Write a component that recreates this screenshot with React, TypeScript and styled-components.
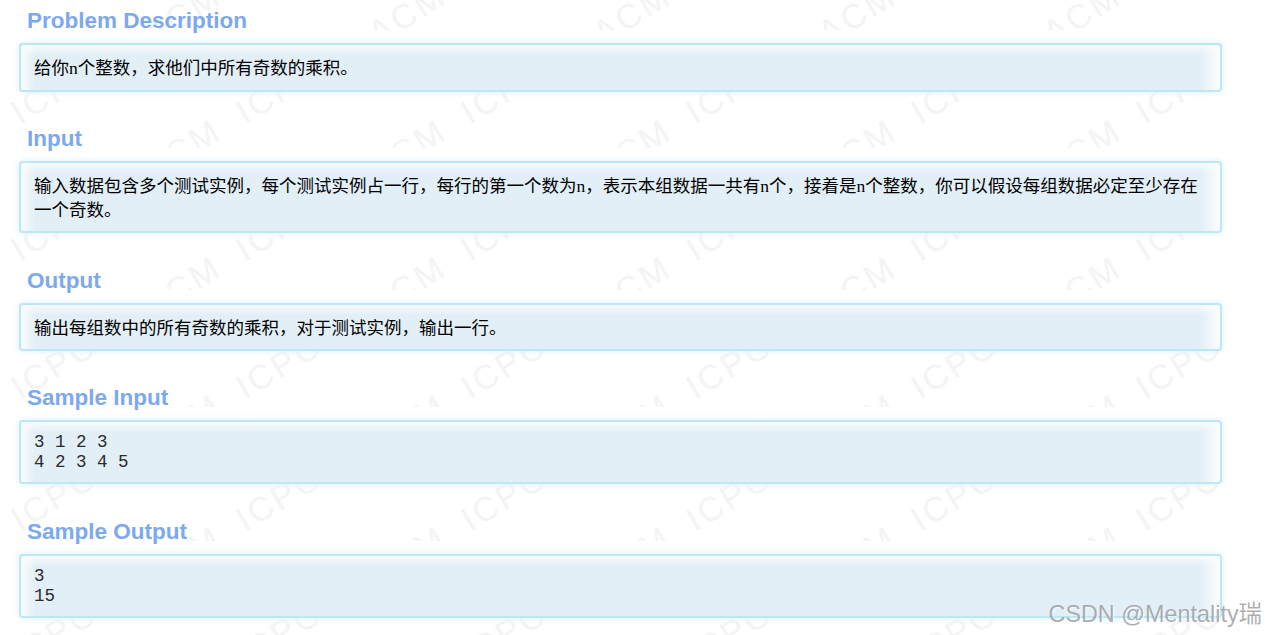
import React from "react";
import styled, { createGlobalStyle } from "styled-components";

const Global = createGlobalStyle`
  html, body { margin: 0; padding: 0; background: #fff; }
  body { width: 1265px; height: 635px; overflow: hidden; }
`;

const Page = styled.div`
  position: relative;
  width: 1265px;
  height: 635px;
  overflow: hidden;
  background: #fff;
`;

const Watermark = styled.svg`
  position: absolute;
  inset: 0;
  width: 1265px;
  height: 635px;
`;

const MarkText = styled.text`
  font-family: "Liberation Sans", Arial, sans-serif;
  font-size: 34px;
  letter-spacing: 3px;
  fill: #f4f4f4;
`;

const Content = styled.main`
  position: relative;
  display: flex;
  flex-direction: column;
`;

const Section = styled.section`
  margin-bottom: 26.36px;
`;

const Heading = styled.h2`
  margin: 0;
  height: 30px;
  box-sizing: border-box;
  padding: 6px 0 0 27px;
  font: bold 22.5px/30px "Liberation Sans", Arial, sans-serif;
  color: #7ca9ee;
`;

const Band = styled.div`
  background: #fff;
  padding: 13px 43px 0 19px;
`;

const Panel = styled.div`
  box-sizing: border-box;
  border: 2px solid #bce7f6;
  border-radius: 4px;
  box-shadow: 0 0 6px 1px #e2f4fb;
  background-color: #e3eff7;
  background-image:
    linear-gradient(to right, #fafdfe, rgba(250, 253, 254, 0) 14px),
    linear-gradient(to left, #fafdfe, rgba(250, 253, 254, 0) 20px),
    linear-gradient(to bottom, #f7fbfd, #e3eff7 10px),
    linear-gradient(to top, #fbfdfe, #edf5fa 9px, #edf5fa 10px, transparent 10px);
`;

const Statement = styled.div`
  padding: 12px 13px 9px;
  font: 17.5px/23.6px "Liberation Serif", "Noto Sans CJK SC", serif;
  color: #000;
`;

const Sample = styled.pre`
  margin: 0;
  padding: 10px 13px 10px;
  font: 17.5px/20px "Liberation Mono", "Courier New", monospace;
  color: #2a2a2a;
`;

const Credit = styled.div`
  position: absolute;
  right: 3px;
  top: 601px;
  font: 23.4px/27px "Liberation Sans", Arial, "Noto Sans CJK SC", sans-serif;
  color: rgba(120, 120, 120, 0.6);
  text-shadow: 1px 1px 1px rgba(255, 255, 255, 0.8);
  white-space: nowrap;
`;

const rowsY = [-10, 125, 262, 400, 532, 668];
const colsX = [-205, 20, 245, 470, 695, 920, 1145, 1370];

const sections = [
  { title: "Problem Description", text: "给你n个整数，求他们中所有奇数的乘积。" },
  {
    title: "Input",
    text: "输入数据包含多个测试实例，每个测试实例占一行，每行的第一个数为n，表示本组数据一共有n个，接着是n个整数，你可以假设每组数据必定至少存在一个奇数。",
  },
  { title: "Output", text: "输出每组数中的所有奇数的乘积，对于测试实例，输出一行。" },
  { title: "Sample Input", sample: "3 1 2 3\n4 2 3 4 5" },
  { title: "Sample Output", sample: "3\n15" },
];

export default function App() {
  return (
    <Page>
      <Global />
      <Watermark viewBox="0 0 1265 635" aria-hidden="true">
        {rowsY.map((y) =>
          colsX.map((x) => (
            <g key={`${x}-${y}`} transform={`translate(${x} ${y}) rotate(-31)`}>
              <MarkText x={0} y={0}>ICPC</MarkText>
              <MarkText x={-24} y={0} textAnchor="end">ACM</MarkText>
            </g>
          ))
        )}
      </Watermark>
      <Content>
        {sections.map((s) => (
          <Section key={s.title}>
            <Heading>{s.title}</Heading>
            <Band>
              <Panel>
                {s.sample ? <Sample>{s.sample}</Sample> : <Statement>{s.text}</Statement>}
              </Panel>
            </Band>
          </Section>
        ))}
      </Content>
      <Credit>CSDN @Mentality瑞</Credit>
    </Page>
  );
}
